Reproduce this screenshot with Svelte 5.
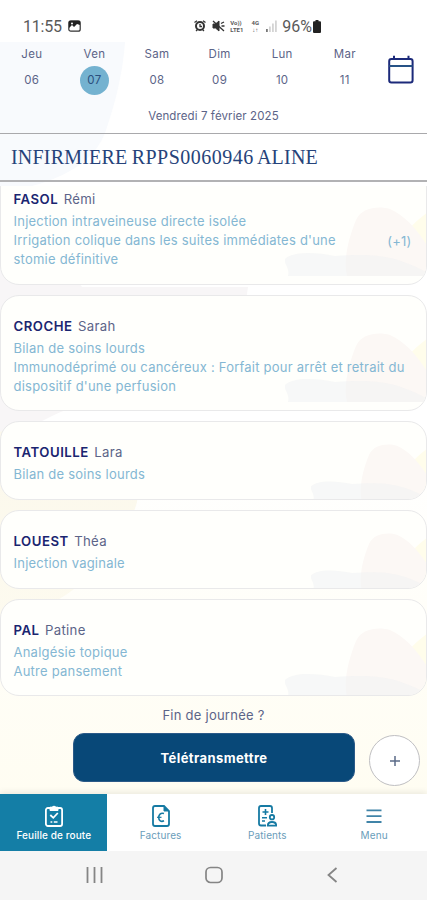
<script>
let selected = 1;

const days = [
	{ name: "Jeu", num: "06" },
	{ name: "Ven", num: "07" },
	{ name: "Sam", num: "08" },
	{ name: "Dim", num: "09" },
	{ name: "Lun", num: "10" },
	{ name: "Mar", num: "11" }
];

const patients = [
	{ last: "FASOL", first: "Rémi", more: 1, size: "tall", care: ["Injection intraveineuse directe isolée", "Irrigation colique dans les suites immédiates d'une", "stomie définitive"] },
	{ last: "CROCHE", first: "Sarah", size: "tall", care: ["Bilan de soins lourds", "Immunodéprimé ou cancéreux : Forfait pour arrêt et retrait du", "dispositif d'une perfusion"] },
	{ last: "TATOUILLE", first: "Lara", size: "small", care: ["Bilan de soins lourds"] },
	{ last: "LOUEST", first: "Théa", size: "small", care: ["Injection vaginale"] },
	{ last: "PAL", first: "Patine", size: "medium", care: ["Analgésie topique", "Autre pansement"] }
];
</script>

<div class="phone">
	<svg class="blobs" viewBox="0 0 427 752" preserveAspectRatio="none">
		<defs>
			<linearGradient id="cream" x1="0" y1="0" x2="0" y2="1">
				<stop offset="0" stop-color="#fffdf2" stop-opacity="0" />
				<stop offset="1" stop-color="#fffdf2" />
			</linearGradient>
		</defs>
		<path d="M0 0H125C122 40 112 70 105 91C90 130 40 145 0 150Z" fill="#f8fafd" />
		<path d="M0 150C40 200 65 220 82 245H248C240 330 100 350 50 375L0 400Z" fill="#f8f6f7" />
		<path d="M0 390C60 360 150 400 137 460C120 520 70 560 0 585Z" fill="#fbf8ec" />
		<rect y="400" width="427" height="352" fill="url(#cream)" />
	</svg>

	<div class="status">
		<span class="time">11:55</span>
		<svg class="pic" width="13" height="12" viewBox="0 0 13 12">
			<rect x=".8" y=".8" width="11.4" height="10.4" rx="2" fill="#fff" stroke="#333" stroke-width="1.2" />
			<path d="M1 1H12V5L9 4 6 7 4 5 1 8Z" fill="#222" />
			<circle cx="4" cy="3.5" r="1" fill="#fff" />
		</svg>
		<svg class="alarm" width="12" height="12" viewBox="0 0 12 12" fill="none" stroke="#333">
			<circle cx="6" cy="6" r="4" stroke-width="2" />
			<path d="M.5 2.5L3 .7M11.5 2.5L9 .7M2 11L3.5 9.5M10 11L8.5 9.5M6 4V6.5H8" stroke-width="1.3" />
		</svg>
		<svg class="mute" width="13" height="12" viewBox="0 0 13 12" fill="none" stroke="#333">
			<path d="M1 4H3.5L7 1V11L3.5 8H1Z" fill="#333" />
			<path d="M1 1L12 11M9 3.5L12 2M9.5 6H12.5" stroke-width="1.3" />
		</svg>
		<span class="net">Vo))<br />LTE1</span>
		<span class="net four">4G<br />↓↑</span>
		<svg class="signal" width="12" height="12" viewBox="0 0 12 12">
			<path d="M1 9H2.8V12H1Z" fill="#777" />
			<path d="M4 6.5H5.8V12H4ZM7 3.5H8.8V12H7ZM10 .5H11.8V12H10Z" fill="#d4d4d4" />
		</svg>
		<span class="pct">96%</span>
		<svg width="8" height="13" viewBox="0 0 8 13" fill="#222"><path d="M2.5 0H5.5V1.2H7Q8 1.2 8 2.4V11.8Q8 13 7 13H1Q0 13 0 11.8V2.4Q0 1.2 1 1.2H2.5Z" /></svg>
	</div>

	<div class="calendar">
		<div class="week">
			{#each days as day, i}
				<div class="day" on:click={() => selected = i} role="button" tabindex="-1" on:keydown={() => {}}>
					<span>{day.name}</span>
					<span class="num" class:active={selected === i}>{day.num}</span>
				</div>
			{/each}
			<svg class="cal" width="26" height="29" viewBox="0 0 26 29" fill="none" stroke="#1c2a7a" stroke-width="2">
				<rect x="1.2" y="4" width="23.4" height="23.5" rx="2.2" />
				<path d="M1.2 11H24.6" stroke="#265286" />
				<path d="M6 .8V4M20.5 .8V4" />
			</svg>
		</div>
		<div class="date">Vendredi 7 février 2025</div>
	</div>

	<div class="nurse">INFIRMIERE <span>RPPS0060946</span> ALINE</div>

	<div class="list">
		{#each patients as p}
			<div class="card {p.size}">
				<svg class="art" viewBox="0 0 143 69">
					<path d="M143 5C136 10 129 16 124 22C130 40 134 56 143 62Z" fill="#fffdeb" />
					<path d="M62 69C58 52 64 30 71 13C77 0 94-1 105 2C119 8 132 22 143 40V69Z" fill="#fcf8f5" />
					<path d="M0 52C8 44 30 45 50 49C84 47 106 46 143 66V69H3C5 60-1 58 0 52Z" fill="#f0f2f3" fill-opacity=".5" />
				</svg>
				<div class="name"><b>{p.last}</b><span>{p.first}</span></div>
				<div class="cares">
					<div>
						{#each p.care as c}
							<div class="care">{c}</div>
						{/each}
					</div>
					{#if p.more}<span class="more">(+{p.more})</span>{/if}
				</div>
			</div>
		{/each}
	</div>

	<div class="actions">
		<div class="end">Fin de journée ?</div>
		<div class="buttons">
			<button class="send">Télétransmettre</button>
			<button class="add" aria-label="Ajouter">
				<svg width="12" height="12" viewBox="0 0 12 12" stroke="#5b6b88" stroke-width="1.5"><path d="M6 1V11M1 6H11" /></svg>
			</button>
		</div>
	</div>

	<div class="nav">
		<div class="tab current">
			<svg width="20" height="22" viewBox="0 0 20 22" fill="none" stroke="#fff" stroke-width="1.8">
				<rect x="1.9" y="3" width="16.2" height="18" rx="2" />
				<path d="M6 2.2H8Q10 0 12 2.2H14V5.5H6Z" fill="#fff" stroke-width="1" />
				<path d="M6.3 10L9.3 12.8 13.8 8" />
				<path d="M6.5 17H8.3M9.8 17H13.5" stroke-width="1.4" />
			</svg>
			<span>Feuille de route</span>
		</div>
		<div class="tab">
			<svg width="20" height="22" viewBox="0 0 20 22" fill="none" stroke="#167aa3" stroke-width="1.8">
				<path d="M4 1H13L18 6V19Q18 21 16 21H4Q2 21 2 19V3Q2 1 4 1Z" />
				<path d="M13 1V6H18Z" fill="#167aa3" stroke-width="1" />
				<path d="M13 8.5C9.5 7.3 7.7 10 7.7 12.5C7.7 15.5 10 17.3 13 15.8" stroke-width="1.6" />
				<path d="M6 12.3H10.5" stroke-width="1.2" />
			</svg>
			<span>Factures</span>
		</div>
		<div class="tab">
			<svg width="20" height="22" viewBox="0 0 20 22" fill="none" stroke="#167aa3" stroke-width="1.8">
				<path d="M9 20.5H4Q2 20.5 2 18.5V3Q2 1 4 1H13Q15 1 15 3V8" />
				<path d="M8.5 4V10M5.5 7H11.5M5 12.8H10M5 16H8" stroke-width="1.6" />
				<circle cx="15" cy="12.2" r="2.2" />
				<path d="M10.8 20.6Q10.8 17 15 17T19.2 20.6Z" />
			</svg>
			<span>Patients</span>
		</div>
		<div class="tab">
			<svg width="20" height="22" viewBox="0 0 20 22" stroke="#4084a8" stroke-width="1.8"><path d="M2.5 5.3H17.5M2.5 11.1H17.5M2.5 17H17.5" /></svg>
			<span>Menu</span>
		</div>
	</div>

	<div class="system">
		<svg width="17" height="16" viewBox="0 0 17 16" stroke="#858585" stroke-width="1.8"><path d="M1.5 0V16M8.5 0V16M15.5 0V16" /></svg>
		<svg width="18" height="18" viewBox="0 0 18 18" fill="none" stroke="#858585" stroke-width="1.7"><rect x="1" y="1.5" width="16" height="15" rx="4.5" /></svg>
		<svg width="17" height="16" viewBox="0 0 17 16" fill="none" stroke="#858585" stroke-width="1.8"><path d="M12.5 1L4.5 8L12.5 15" /></svg>
	</div>
</div>

<style>
:global(body) {
	background: #fff;
}

.phone {
	position: relative;
	isolation: isolate;
	width: 427px;
	height: 900px;
	overflow: hidden;
	display: flex;
	flex-direction: column;
	font-family: Inter, "Liberation Sans", sans-serif;
	color: #5c6488;
	background: #fff;
}

.blobs {
	position: absolute;
	z-index: -1;
	top: 42px;
	left: 0;
	width: 427px;
	height: 752px;
}

.status {
	height: 42px;
	box-sizing: border-box;
	padding: 10px 106px 0 23px;
	display: flex;
	align-items: center;
	font-family: Roboto, sans-serif;
	font-size: 16px;
	color: #5a5a5a;
}

.time {
	width: 40px;
	letter-spacing: -.2px;
}

.pic {
	margin-left: 5px;
}

.alarm {
	margin-left: auto;
}

.mute {
	margin-left: 6px;
}

.net {
	width: 15px;
	margin-left: 5px;
	font-size: 6px;
	font-weight: 700;
	line-height: 7px;
}

.four {
	width: 10px;
	text-align: center;
}

.signal {
	margin-left: 5px;
}

.pct {
	margin-left: 5px;
	margin-right: 1px;
}

.calendar {
	height: 91px;
}

.week {
	display: flex;
	height: 53px;
	padding-left: .5px;
}

.day {
	width: 62.6px;
	display: flex;
	flex-direction: column;
	align-items: center;
	font-size: 11.5px;
	line-height: 24px;
	letter-spacing: .3px;
}

.num {
	width: 29px;
	height: 29px;
	line-height: 29px;
	text-align: center;
	border-radius: 50%;
}

.active {
	background: #74b2d0;
	color: #2b4f7e;
}

.cal {
	margin: 13px 0 0 12px;
}

.date {
	font-size: 11.5px;
	line-height: 20px;
	padding-top: 11px;
	text-align: center;
	letter-spacing: .1px;
}

.nurse {
	height: 49px;
	box-sizing: border-box;
	border-top: 1px solid #a9a9ac;
	border-bottom: 2px solid #b2b2b4;
	padding-left: 11px;
	font: 20px/46px "Liberation Serif", serif;
	letter-spacing: .2px;
	word-spacing: -1px;
	color: #26437a;
	white-space: nowrap;
}

.nurse span {
	letter-spacing: .5px;
}

.list {
	margin-top: 4px;
	height: 514px;
	overflow: hidden;
	display: flex;
	flex-direction: column;
	gap: 10.2px;
}

.card {
	position: relative;
	flex: none;
	box-sizing: border-box;
	border: 1.5px solid #e9e9ea;
	border-radius: 19px;
	overflow: hidden;
	padding: 20px 12.5px 14.6px;
	background: #fffffc;
}

.card:first-child {
	margin-top: -17.7px;
}

.art {
	position: absolute;
	right: -2px;
	bottom: -2px;
	width: 143px;
	z-index: 0;
}

.tall .art {
	bottom: 8px;
}

.small .art {
	width: 117px;
}

.name {
	position: relative;
	font-size: 13.2px;
	line-height: 20px;
	letter-spacing: .3px;
	margin-bottom: 3px;
}

.name b {
	color: #1a2570;
	font-weight: 600;
	letter-spacing: .5px;
	margin-right: 5.5px;
}

.cares {
	position: relative;
	display: flex;
	justify-content: space-between;
	align-items: center;
	font-size: 13px;
	letter-spacing: .23px;
	color: #84b7d3;
}

.care {
	line-height: 18.9px;
	white-space: nowrap;
}

.more {
	margin-right: 2px;
}

.actions {
	height: 94px;
}

.end {
	font-size: 13px;
	line-height: 20px;
	letter-spacing: .25px;
	padding-top: 5px;
	height: 33px;
	box-sizing: border-box;
	text-align: center;
}

.buttons {
	display: flex;
	gap: 14px;
	padding-left: 73px;
}

.send {
	width: 282px;
	height: 49px;
	border: 1px solid #2b5a88;
	border-radius: 11px;
	background: #084878;
	color: #fff;
	font: 700 13px Inter, sans-serif;
	letter-spacing: .4px;
}

.add {
	width: 51px;
	height: 51px;
	margin-top: 2px;
	padding: 0;
	border: 1px solid #bfbfc2;
	border-radius: 50%;
	background: #fff;
	display: flex;
	align-items: center;
	justify-content: center;
}

.nav {
	height: 57px;
	display: flex;
	background: #fff;
	box-shadow: 0 -2px 6px rgba(0, 0, 0, .08);
}

.tab {
	flex: 1;
	display: flex;
	flex-direction: column;
	align-items: center;
	padding-top: 11px;
	padding-left: 1px;
	box-sizing: border-box;
	font-size: 10px;
	line-height: 16px;
	letter-spacing: .1px;
	color: #6a9dba;
}

.current {
	background: #147ea6;
	color: #fff;
	font-weight: 500;
}

.system {
	flex: 1;
	display: flex;
	align-items: center;
	justify-content: space-between;
	padding: 0 86px 2px 86px;
	background: #f5f5f5;
}
</style>
